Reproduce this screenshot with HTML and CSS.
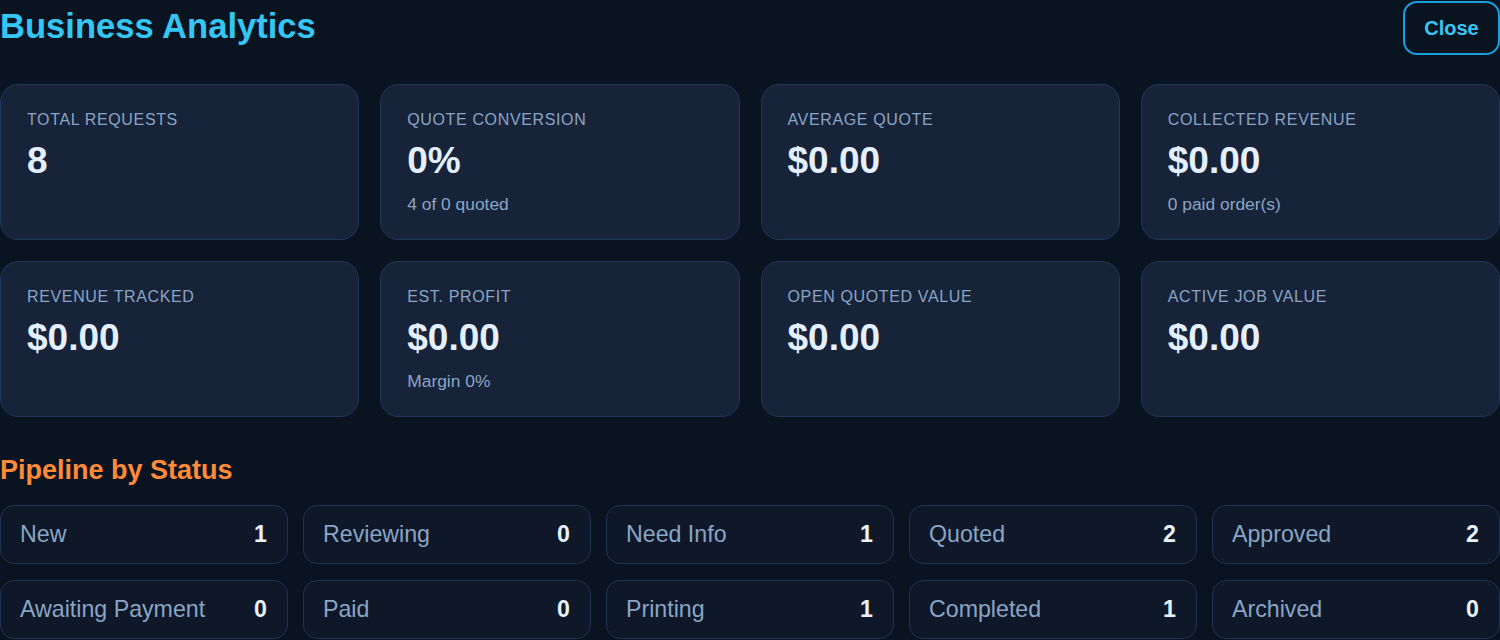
FILE: index.html
```html
<!DOCTYPE html>
<html lang="en">
<head>
  <meta charset="UTF-8">
  <meta name="viewport" content="width=device-width, initial-scale=1.0">
  <title>Business Analytics</title>
  <link rel="stylesheet" href="styles.css">
</head>
<body>
  <div class="analytics-panel">
    <div class="panel-header">
      <h1>Business Analytics</h1>
      <button class="close-button" id="closePanel">Close</button>
    </div>

    <!-- Summary metrics -->
    <div class="metric-grid">
      <div class="metric-card">
        <div class="metric-label">Total Requests</div>
        <div class="metric-value">8</div>
      </div>
      <div class="metric-card">
        <div class="metric-label">Quote Conversion</div>
        <div class="metric-value">0%</div>
        <div class="metric-note">4 of 0 quoted</div>
      </div>
      <div class="metric-card">
        <div class="metric-label">Average Quote</div>
        <div class="metric-value">$0.00</div>
      </div>
      <div class="metric-card">
        <div class="metric-label">Collected Revenue</div>
        <div class="metric-value">$0.00</div>
        <div class="metric-note">0 paid order(s)</div>
      </div>
      <div class="metric-card">
        <div class="metric-label">Revenue Tracked</div>
        <div class="metric-value">$0.00</div>
      </div>
      <div class="metric-card">
        <div class="metric-label">Est. Profit</div>
        <div class="metric-value">$0.00</div>
        <div class="metric-note">Margin 0%</div>
      </div>
      <div class="metric-card">
        <div class="metric-label">Open Quoted Value</div>
        <div class="metric-value">$0.00</div>
      </div>
      <div class="metric-card">
        <div class="metric-label">Active Job Value</div>
        <div class="metric-value">$0.00</div>
      </div>
    </div>

    <!-- Pipeline counts -->
    <h2 class="section-title">Pipeline by Status</h2>
    <div class="status-grid">
      <div class="status-item"><span>New</span><strong>1</strong></div>
      <div class="status-item"><span>Reviewing</span><strong>0</strong></div>
      <div class="status-item"><span>Need Info</span><strong>1</strong></div>
      <div class="status-item"><span>Quoted</span><strong>2</strong></div>
      <div class="status-item"><span>Approved</span><strong>2</strong></div>
      <div class="status-item"><span>Awaiting Payment</span><strong>0</strong></div>
      <div class="status-item"><span>Paid</span><strong>0</strong></div>
      <div class="status-item"><span>Printing</span><strong>1</strong></div>
      <div class="status-item"><span>Completed</span><strong>1</strong></div>
      <div class="status-item"><span>Archived</span><strong>0</strong></div>
    </div>
  </div>
</body>
</html>
```

FILE: styles.css
```css
/* Dark analytics panel */
body {
  font-family: "Liberation Sans", Arial, sans-serif;
  margin: 0;
  background-color: #0a1420;
  color: #e6f0ff;
}
.analytics-panel {
  display: flex;
  flex-direction: column;
}
.panel-header {
  display: flex;
  justify-content: space-between;
  align-items: flex-start;
  height: 55px;
}
.panel-header h1 {
  margin: 7px 0 0;
  font-size: 34.6px;
  font-weight: bold;
  color: #35c6f4;
}
.close-button {
  margin-top: 1px;
  width: 97px;
  height: 54px;
  background: transparent;
  color: #38c6f4;
  border: 2px solid #1a9ee2;
  border-radius: 14px;
  font-family: inherit;
  font-size: 20px;
  font-weight: bold;
  cursor: pointer;
}
.metric-grid {
  display: grid;
  grid-template-columns: repeat(4, 1fr);
  gap: 21px 21px;
  margin-top: 29px;
}
.metric-card {
  background-color: #172339;
  border: 1px solid #22365a;
  border-radius: 18px;
  padding: 26px 26px 23px;
  min-height: 105px;
}
.metric-label {
  font-size: 16px;
  letter-spacing: 0.04em;
  text-transform: uppercase;
  color: #8aa5c4;
}
.metric-value {
  margin-top: 10px;
  font-size: 37px;
  font-weight: bold;
  line-height: 1.2;
  color: #e4efff;
}
.metric-note {
  margin-top: 11px;
  font-size: 17.4px;
  color: #8aa5c4;
}
.section-title {
  margin: 38px 0 19px;
  font-size: 27px;
  font-weight: bold;
  color: #ff8a38;
}
.status-grid {
  display: grid;
  grid-template-columns: repeat(5, 1fr);
  gap: 16px 15px;
}
.status-item {
  display: flex;
  justify-content: space-between;
  align-items: center;
  background-color: #0e1829;
  border: 1px solid #1f3351;
  border-radius: 14px;
  padding: 15px 20px 15px 19px;
  font-size: 23.2px;
}
.status-item span {
  color: #8aa5c4;
}
.status-item strong {
  color: #e8f1fb;
}
```
